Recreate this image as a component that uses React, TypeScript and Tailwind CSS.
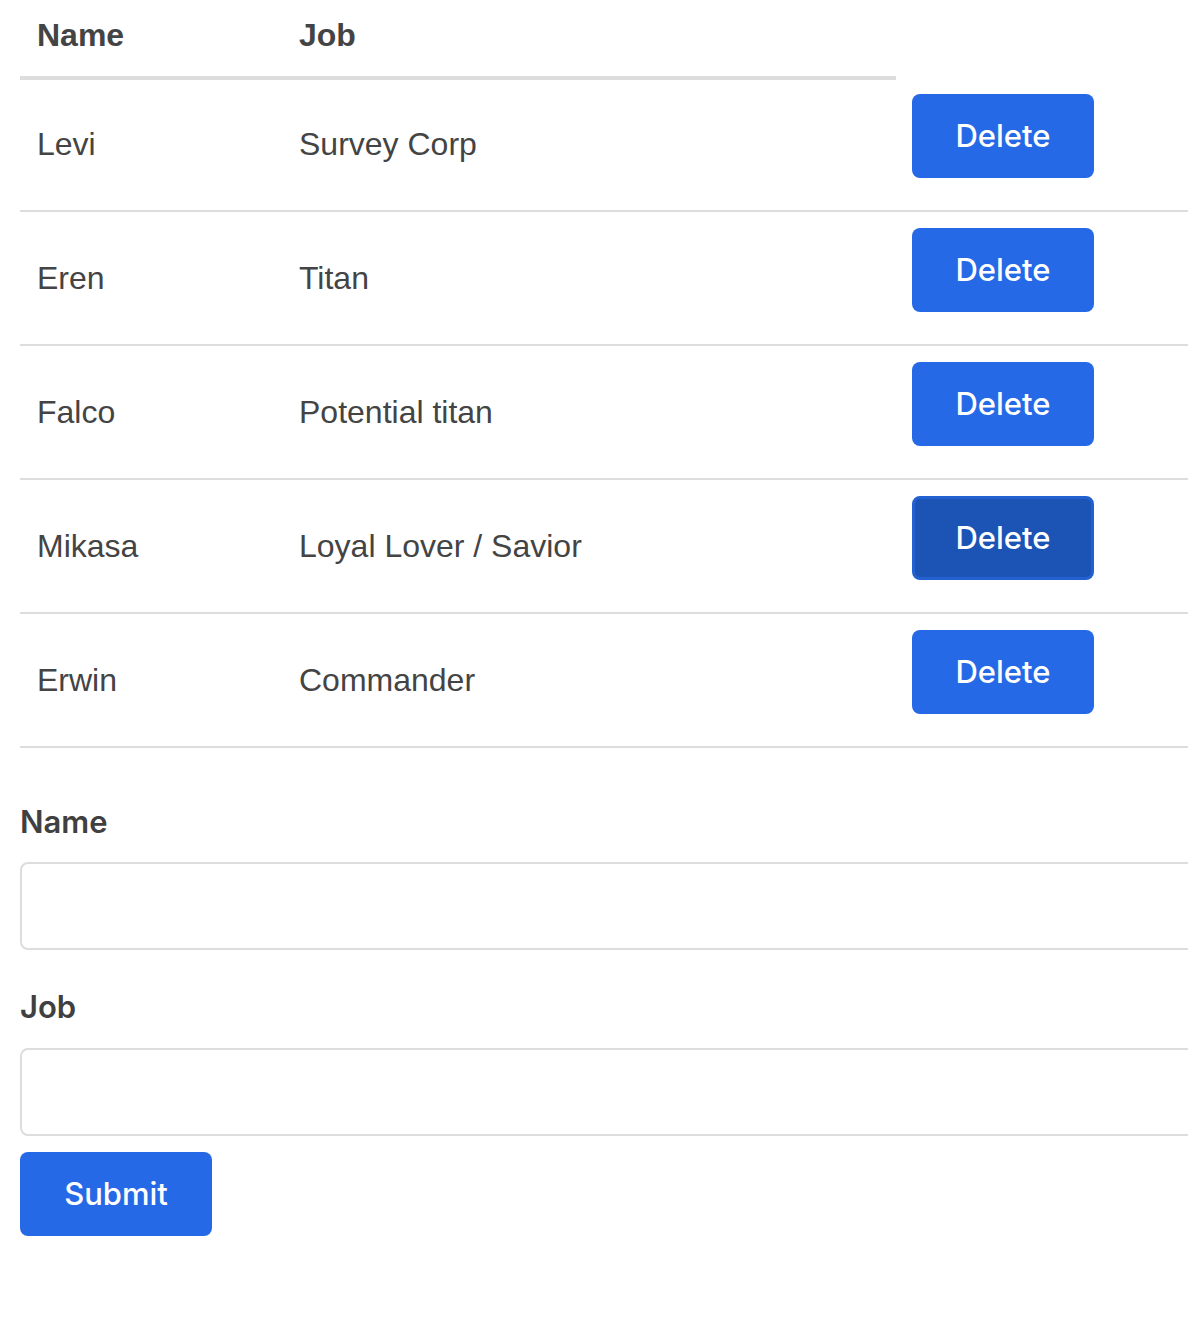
import React from "react";

const rows = [
  { name: "Levi", job: "Survey Corp" },
  { name: "Eren", job: "Titan" },
  { name: "Falco", job: "Potential titan" },
  { name: "Mikasa", job: "Loyal Lover / Savior", active: true },
  { name: "Erwin", job: "Commander" },
];

export default function App() {
  return (
    <div className="w-full overflow-hidden bg-white min-h-[1328px] text-[#444]" style={{ fontFamily: '"Liberation Sans", Arial, sans-serif' }}>
      <div className="w-[1240px] pl-5">
        {/* header */}
        <div className="flex w-[876px] h-[80px] border-b-4 border-[#dddddd] items-center pb-[6px]">
          <div className="w-[262px] pl-[17px] text-[32px] font-bold">Name</div>
          <div className="w-[614px] pl-[17px] text-[32px] font-bold">Job</div>
        </div>
        {rows.map((r, i) => (
          <div key={r.name} className={"flex border-b-2 border-[#dddddd] " + (i === 0 ? "h-[132px]" : "h-[134px]")}>
            <div className={"w-[262px] pl-[17px] text-[32px] flex items-center " + (i === 0 ? "pb-[2px]" : "pb-0")}>{r.name}</div>
            <div className={"w-[614px] pl-[17px] text-[32px] flex items-center " + (i === 0 ? "pb-[2px]" : "pb-0")}>{r.job}</div>
            <div className={"pl-4 " + (i === 0 ? "pt-[14px]" : "pt-[16px]")}>
              <button
                className={
                  "w-[182px] h-[84px] rounded-[8px] text-white text-[31px] font-medium " +
                  (r.active ? "bg-[#1c54b6] border-[3px] border-[#2360d0]" : "bg-[#2669e6]")
                }
                style={{ fontFamily: 'Inter, "Liberation Sans", sans-serif' }}
              >
                Delete
              </button>
            </div>
          </div>
        ))}
        {/* form */}
        <div className="pt-[52px]" style={{ fontFamily: 'Inter, "Liberation Sans", sans-serif' }}>
          <div className="text-[31px] font-semibold leading-[48px] h-[48px] -mt-[2px] text-[#404040]">Name</div>
          <div className="mt-[16px] h-[88px] w-[1220px] rounded-[8px] border-2 border-[#dddddd]" />
          <div className="mt-[33px] text-[31px] font-semibold leading-[48px] h-[48px] text-[#404040]">Job</div>
          <div className="mt-[17px] h-[88px] w-[1220px] rounded-[8px] border-2 border-[#dddddd]" />
          <button className="mt-[16px] w-[192px] h-[84px] rounded-[8px] bg-[#2669e6] text-white text-[31px] font-medium">
            Submit
          </button>
        </div>
      </div>
    </div>
  );
}
